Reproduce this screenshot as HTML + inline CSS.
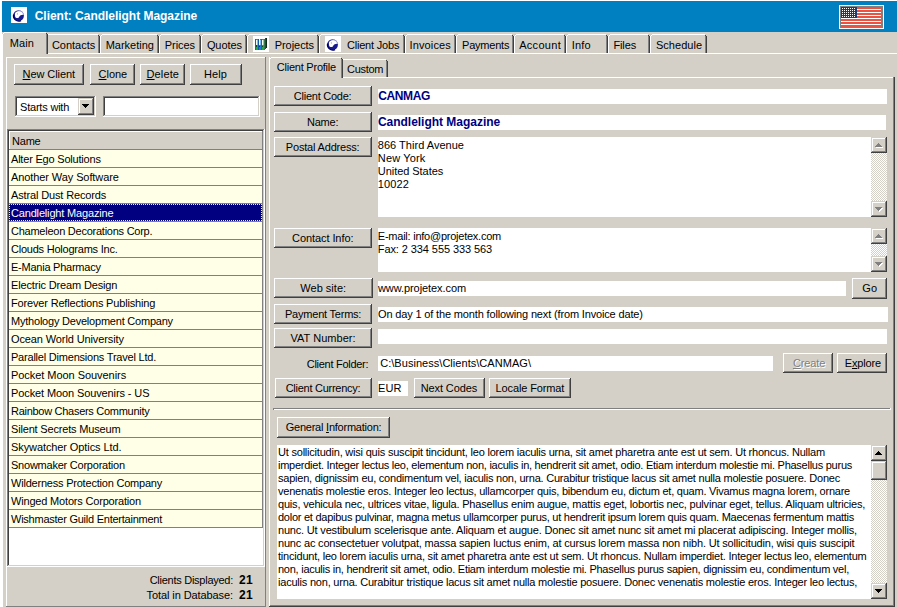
<!DOCTYPE html>
<html><head><meta charset="utf-8"><title>Client: Candlelight Magazine</title>
<style>
html,body{margin:0;padding:0;}
body{width:897px;height:607px;overflow:hidden;position:relative;background:#fff;font-family:"Liberation Sans", sans-serif;}
body>div{position:absolute;box-sizing:border-box;}
u{text-decoration:underline;text-underline-offset:1px;}
</style></head><body>
<div style="left:2px;top:32px;width:895px;height:575px;background:#D4D0C8;"></div>
<div style="left:2px;top:1px;width:895px;height:31px;background:#0080C0;"></div>
<svg style="position:absolute;left:11px;top:7px" width="16" height="16" viewBox="0 0 16 16">
<rect width="16" height="16" fill="#fff"/>
<circle cx="7.6" cy="8.6" r="5.4" fill="#1A1A90"/>
<path d="M2.6 7.5 A5.3 5.3 0 0 0 10 13.6" fill="none" stroke="#000060" stroke-width="1.2"/>
<path d="M3.9 6.6 C4.4 4.9 6.0 3.9 8.2 3.9 C10.6 4.0 12.6 5.4 13.2 7.8 C11.4 7.8 9.8 8.0 8.8 8.9 C8.2 9.6 7.8 10.6 7.0 11.0 C5.6 11.4 4.3 10.6 4.0 9.2 Z" fill="#fff"/>
<path d="M7.5 3.6 A5.0 5.0 0 0 1 12.6 8.2" fill="none" stroke="#9A9AD8" stroke-width="0.9"/>
<circle cx="6.4" cy="6.9" r="0.55" fill="#9090D0"/>
</svg>
<div style="left:34.699999999999996px;top:6px;font-size:12px;line-height:20px;font-weight:bold;color:#FFFFFF;letter-spacing:-0.030px;white-space:pre;">Client: Candlelight Magazine</div>
<svg style="position:absolute;left:839px;top:5px" width="45" height="24" viewBox="0 0 45 24" shape-rendering="crispEdges">
<rect width="45" height="24" fill="#fff"/>
<rect x="1" y="1" width="43" height="22" fill="#808080"/>
<rect x="2" y="2" width="40" height="20" fill="#fff"/>
<rect x="2" y="2" width="40" height="2" fill="#E85444"/><rect x="2" y="5" width="40" height="2" fill="#E85444"/><rect x="2" y="8" width="40" height="2" fill="#E85444"/><rect x="2" y="11" width="40" height="2" fill="#E85444"/><rect x="2" y="14" width="40" height="2" fill="#E85444"/><rect x="2" y="17" width="40" height="2" fill="#E85444"/><rect x="2" y="20" width="40" height="2" fill="#E85444"/>
<rect x="2" y="2" width="16" height="11" fill="#1E3C74"/>
<rect x="3" y="3" width="1" height="1" fill="#fff"/><rect x="5" y="3" width="1" height="1" fill="#fff"/><rect x="7" y="3" width="1" height="1" fill="#fff"/><rect x="9" y="3" width="1" height="1" fill="#fff"/><rect x="11" y="3" width="1" height="1" fill="#fff"/><rect x="13" y="3" width="1" height="1" fill="#fff"/><rect x="15" y="3" width="1" height="1" fill="#fff"/><rect x="3" y="5" width="1" height="1" fill="#fff"/><rect x="5" y="5" width="1" height="1" fill="#fff"/><rect x="7" y="5" width="1" height="1" fill="#fff"/><rect x="9" y="5" width="1" height="1" fill="#fff"/><rect x="11" y="5" width="1" height="1" fill="#fff"/><rect x="13" y="5" width="1" height="1" fill="#fff"/><rect x="15" y="5" width="1" height="1" fill="#fff"/><rect x="3" y="7" width="1" height="1" fill="#fff"/><rect x="5" y="7" width="1" height="1" fill="#fff"/><rect x="7" y="7" width="1" height="1" fill="#fff"/><rect x="9" y="7" width="1" height="1" fill="#fff"/><rect x="11" y="7" width="1" height="1" fill="#fff"/><rect x="13" y="7" width="1" height="1" fill="#fff"/><rect x="15" y="7" width="1" height="1" fill="#fff"/><rect x="3" y="9" width="1" height="1" fill="#fff"/><rect x="5" y="9" width="1" height="1" fill="#fff"/><rect x="7" y="9" width="1" height="1" fill="#fff"/><rect x="9" y="9" width="1" height="1" fill="#fff"/><rect x="11" y="9" width="1" height="1" fill="#fff"/><rect x="13" y="9" width="1" height="1" fill="#fff"/><rect x="15" y="9" width="1" height="1" fill="#fff"/><rect x="3" y="11" width="1" height="1" fill="#fff"/><rect x="5" y="11" width="1" height="1" fill="#fff"/><rect x="7" y="11" width="1" height="1" fill="#fff"/><rect x="9" y="11" width="1" height="1" fill="#fff"/><rect x="11" y="11" width="1" height="1" fill="#fff"/><rect x="13" y="11" width="1" height="1" fill="#fff"/><rect x="15" y="11" width="1" height="1" fill="#fff"/>
</svg>
<div style="left:2px;top:53px;width:895px;height:1px;background:#FFFFFF;"></div>
<div style="left:2px;top:53px;width:1px;height:554px;background:#FFFFFF;"></div>
<div style="left:3px;top:33px;width:43px;height:21px;background:#D4D0C8;"></div>
<div style="left:4px;top:32px;width:42px;height:1px;background:#FFFFFF;"></div>
<div style="left:3px;top:33px;width:1px;height:1px;background:#FFFFFF;"></div>
<div style="left:2px;top:34px;width:1px;height:20px;background:#FFFFFF;"></div>
<div style="left:46px;top:33px;width:1px;height:1px;background:#404040;"></div>
<div style="left:46px;top:34px;width:1px;height:20px;background:#808080;"></div>
<div style="left:47px;top:34px;width:1px;height:20px;background:#404040;"></div>
<div style="left:9.700000000000001px;top:33px;font-size:11px;line-height:20px;font-weight:normal;color:#000;letter-spacing:0.139px;white-space:pre;">Main</div>
<div style="left:48px;top:34px;width:50px;height:1px;background:#FFFFFF;"></div>
<div style="left:98px;top:35px;width:1px;height:1px;background:#404040;"></div>
<div style="left:98px;top:36px;width:1px;height:17px;background:#808080;"></div>
<div style="left:99px;top:36px;width:1px;height:17px;background:#404040;"></div>
<div style="left:51.9px;top:35px;font-size:11px;line-height:20px;font-weight:normal;color:#000;letter-spacing:-0.003px;white-space:pre;">Contacts</div>
<div style="left:102px;top:34px;width:55px;height:1px;background:#FFFFFF;"></div>
<div style="left:101px;top:35px;width:1px;height:1px;background:#FFFFFF;"></div>
<div style="left:100px;top:36px;width:1px;height:17px;background:#FFFFFF;"></div>
<div style="left:157px;top:35px;width:1px;height:1px;background:#404040;"></div>
<div style="left:157px;top:36px;width:1px;height:17px;background:#808080;"></div>
<div style="left:158px;top:36px;width:1px;height:17px;background:#404040;"></div>
<div style="left:105.7px;top:35px;font-size:11px;line-height:20px;font-weight:normal;color:#000;letter-spacing:-0.011px;white-space:pre;">Marketing</div>
<div style="left:161px;top:34px;width:38px;height:1px;background:#FFFFFF;"></div>
<div style="left:160px;top:35px;width:1px;height:1px;background:#FFFFFF;"></div>
<div style="left:159px;top:36px;width:1px;height:17px;background:#FFFFFF;"></div>
<div style="left:199px;top:35px;width:1px;height:1px;background:#404040;"></div>
<div style="left:199px;top:36px;width:1px;height:17px;background:#808080;"></div>
<div style="left:200px;top:36px;width:1px;height:17px;background:#404040;"></div>
<div style="left:164.70000000000002px;top:35px;font-size:11px;line-height:20px;font-weight:normal;color:#000;letter-spacing:-0.027px;white-space:pre;">Prices</div>
<div style="left:203px;top:34px;width:42px;height:1px;background:#FFFFFF;"></div>
<div style="left:202px;top:35px;width:1px;height:1px;background:#FFFFFF;"></div>
<div style="left:201px;top:36px;width:1px;height:17px;background:#FFFFFF;"></div>
<div style="left:245px;top:35px;width:1px;height:1px;background:#404040;"></div>
<div style="left:245px;top:36px;width:1px;height:17px;background:#808080;"></div>
<div style="left:246px;top:36px;width:1px;height:17px;background:#404040;"></div>
<div style="left:206.9px;top:35px;font-size:11px;line-height:20px;font-weight:normal;color:#000;letter-spacing:-0.078px;white-space:pre;">Quotes</div>
<div style="left:249px;top:34px;width:68px;height:1px;background:#FFFFFF;"></div>
<div style="left:248px;top:35px;width:1px;height:1px;background:#FFFFFF;"></div>
<div style="left:247px;top:36px;width:1px;height:17px;background:#FFFFFF;"></div>
<div style="left:317px;top:35px;width:1px;height:1px;background:#404040;"></div>
<div style="left:317px;top:36px;width:1px;height:17px;background:#808080;"></div>
<div style="left:318px;top:36px;width:1px;height:17px;background:#404040;"></div>
<svg style="position:absolute;left:253px;top:36px" width="16" height="16" viewBox="0 0 16 16" shape-rendering="crispEdges">
<rect width="16" height="16" fill="#fff"/>
<rect x="11" y="3" width="1" height="11" fill="#3A7A50"/>
<rect x="12" y="2" width="1" height="11" fill="#22503A"/>
<rect x="13" y="2" width="1" height="10" fill="#0E2A1A"/>
<rect x="2" y="3" width="3" height="11" fill="#18B040"/>
<rect x="5" y="3" width="3" height="11" fill="#2078D8"/>
<rect x="8" y="3" width="3" height="11" fill="#18B040"/>
<rect x="2" y="3" width="1" height="11" fill="#0E8030"/>
<rect x="5" y="3" width="1" height="11" fill="#1058A8"/>
<rect x="8" y="3" width="1" height="11" fill="#0E8030"/>
<rect x="3" y="4" width="1" height="5" fill="#F4FFF4"/>
<rect x="6" y="3" width="1" height="6" fill="#F8FCFF"/>
<rect x="9" y="4" width="1" height="5" fill="#F4FFF4"/>
<rect x="4" y="4" width="1" height="5" fill="#70D890"/>
<rect x="7" y="4" width="1" height="5" fill="#80B8F0"/>
<rect x="10" y="4" width="1" height="5" fill="#70D890"/>
<rect x="3" y="9" width="1" height="2" fill="#0A5020"/>
<rect x="6" y="10" width="1" height="1" fill="#0A3070"/>
<rect x="9" y="10" width="1" height="1" fill="#0A5020"/>
</svg>
<div style="left:274.7px;top:35px;font-size:11px;line-height:20px;font-weight:normal;color:#000;letter-spacing:-0.044px;white-space:pre;">Projects</div>
<div style="left:321px;top:34px;width:82px;height:1px;background:#FFFFFF;"></div>
<div style="left:320px;top:35px;width:1px;height:1px;background:#FFFFFF;"></div>
<div style="left:319px;top:36px;width:1px;height:17px;background:#FFFFFF;"></div>
<div style="left:403px;top:35px;width:1px;height:1px;background:#404040;"></div>
<div style="left:403px;top:36px;width:1px;height:17px;background:#808080;"></div>
<div style="left:404px;top:36px;width:1px;height:17px;background:#404040;"></div>
<svg style="position:absolute;left:325px;top:36px" width="16" height="16" viewBox="0 0 16 16">
<rect width="16" height="16" fill="#fff"/>
<circle cx="7.6" cy="8.6" r="5.4" fill="#1A1A90"/>
<path d="M2.6 7.5 A5.3 5.3 0 0 0 10 13.6" fill="none" stroke="#000060" stroke-width="1.2"/>
<path d="M3.9 6.6 C4.4 4.9 6.0 3.9 8.2 3.9 C10.6 4.0 12.6 5.4 13.2 7.8 C11.4 7.8 9.8 8.0 8.8 8.9 C8.2 9.6 7.8 10.6 7.0 11.0 C5.6 11.4 4.3 10.6 4.0 9.2 Z" fill="#fff"/>
<path d="M7.5 3.6 A5.0 5.0 0 0 1 12.6 8.2" fill="none" stroke="#9A9AD8" stroke-width="0.9"/>
<circle cx="6.4" cy="6.9" r="0.55" fill="#9090D0"/>
</svg>
<div style="left:346.90000000000003px;top:35px;font-size:11px;line-height:20px;font-weight:normal;color:#000;letter-spacing:-0.193px;white-space:pre;">Client Jobs</div>
<div style="left:407px;top:34px;width:47px;height:1px;background:#FFFFFF;"></div>
<div style="left:406px;top:35px;width:1px;height:1px;background:#FFFFFF;"></div>
<div style="left:405px;top:36px;width:1px;height:17px;background:#FFFFFF;"></div>
<div style="left:454px;top:35px;width:1px;height:1px;background:#404040;"></div>
<div style="left:454px;top:36px;width:1px;height:17px;background:#808080;"></div>
<div style="left:455px;top:36px;width:1px;height:17px;background:#404040;"></div>
<div style="left:409.5px;top:35px;font-size:11px;line-height:20px;font-weight:normal;color:#000;letter-spacing:0.143px;white-space:pre;">Invoices</div>
<div style="left:458px;top:34px;width:54px;height:1px;background:#FFFFFF;"></div>
<div style="left:457px;top:35px;width:1px;height:1px;background:#FFFFFF;"></div>
<div style="left:456px;top:36px;width:1px;height:17px;background:#FFFFFF;"></div>
<div style="left:512px;top:35px;width:1px;height:1px;background:#404040;"></div>
<div style="left:512px;top:36px;width:1px;height:17px;background:#808080;"></div>
<div style="left:513px;top:36px;width:1px;height:17px;background:#404040;"></div>
<div style="left:462.1px;top:35px;font-size:11px;line-height:20px;font-weight:normal;color:#000;letter-spacing:-0.228px;white-space:pre;">Payments</div>
<div style="left:516px;top:34px;width:48px;height:1px;background:#FFFFFF;"></div>
<div style="left:515px;top:35px;width:1px;height:1px;background:#FFFFFF;"></div>
<div style="left:514px;top:36px;width:1px;height:17px;background:#FFFFFF;"></div>
<div style="left:564px;top:35px;width:1px;height:1px;background:#404040;"></div>
<div style="left:564px;top:36px;width:1px;height:17px;background:#808080;"></div>
<div style="left:565px;top:36px;width:1px;height:17px;background:#404040;"></div>
<div style="left:519.1999999999999px;top:35px;font-size:11px;line-height:20px;font-weight:normal;color:#000;letter-spacing:0.293px;white-space:pre;">Account</div>
<div style="left:568px;top:34px;width:38px;height:1px;background:#FFFFFF;"></div>
<div style="left:567px;top:35px;width:1px;height:1px;background:#FFFFFF;"></div>
<div style="left:566px;top:36px;width:1px;height:17px;background:#FFFFFF;"></div>
<div style="left:606px;top:35px;width:1px;height:1px;background:#404040;"></div>
<div style="left:606px;top:36px;width:1px;height:17px;background:#808080;"></div>
<div style="left:607px;top:36px;width:1px;height:17px;background:#404040;"></div>
<div style="left:571.8px;top:35px;font-size:11px;line-height:20px;font-weight:normal;color:#000;letter-spacing:0.135px;white-space:pre;">Info</div>
<div style="left:610px;top:34px;width:38px;height:1px;background:#FFFFFF;"></div>
<div style="left:609px;top:35px;width:1px;height:1px;background:#FFFFFF;"></div>
<div style="left:608px;top:36px;width:1px;height:17px;background:#FFFFFF;"></div>
<div style="left:648px;top:35px;width:1px;height:1px;background:#404040;"></div>
<div style="left:648px;top:36px;width:1px;height:17px;background:#808080;"></div>
<div style="left:649px;top:36px;width:1px;height:17px;background:#404040;"></div>
<div style="left:613.5px;top:35px;font-size:11px;line-height:20px;font-weight:normal;color:#000;letter-spacing:-0.147px;white-space:pre;">Files</div>
<div style="left:652px;top:34px;width:53px;height:1px;background:#FFFFFF;"></div>
<div style="left:651px;top:35px;width:1px;height:1px;background:#FFFFFF;"></div>
<div style="left:650px;top:36px;width:1px;height:17px;background:#FFFFFF;"></div>
<div style="left:705px;top:35px;width:1px;height:1px;background:#404040;"></div>
<div style="left:705px;top:36px;width:1px;height:17px;background:#808080;"></div>
<div style="left:706px;top:36px;width:1px;height:17px;background:#404040;"></div>
<div style="left:655.9px;top:35px;font-size:11px;line-height:20px;font-weight:normal;color:#000;letter-spacing:0.053px;white-space:pre;">Schedule</div>
<div style="left:6px;top:57px;width:260px;height:1px;background:#FFFFFF;"></div>
<div style="left:6px;top:57px;width:1px;height:550px;background:#FFFFFF;"></div>
<div style="left:265px;top:57px;width:1px;height:550px;background:#808080;"></div>
<div style="left:6px;top:606px;width:260px;height:1px;background:#808080;"></div>
<div style="left:14px;top:64px;width:70px;height:21px;background:#D4D0C8;"></div>
<div style="left:14px;top:64px;width:70px;height:1px;background:#FFFFFF;"></div>
<div style="left:14px;top:64px;width:1px;height:21px;background:#FFFFFF;"></div>
<div style="left:14px;top:84px;width:70px;height:1px;background:#404040;"></div>
<div style="left:83px;top:64px;width:1px;height:21px;background:#404040;"></div>
<div style="left:15px;top:83px;width:68px;height:1px;background:#808080;"></div>
<div style="left:82px;top:65px;width:1px;height:19px;background:#808080;"></div>
<div style="left:22.6px;top:64px;font-size:11px;line-height:20px;font-weight:normal;color:#000;letter-spacing:-0.080px;white-space:pre;"><u>N</u>ew Client</div>
<div style="left:90px;top:64px;width:45px;height:21px;background:#D4D0C8;"></div>
<div style="left:90px;top:64px;width:45px;height:1px;background:#FFFFFF;"></div>
<div style="left:90px;top:64px;width:1px;height:21px;background:#FFFFFF;"></div>
<div style="left:90px;top:84px;width:45px;height:1px;background:#404040;"></div>
<div style="left:134px;top:64px;width:1px;height:21px;background:#404040;"></div>
<div style="left:91px;top:83px;width:43px;height:1px;background:#808080;"></div>
<div style="left:133px;top:65px;width:1px;height:19px;background:#808080;"></div>
<div style="left:98.6px;top:64px;font-size:11px;line-height:20px;font-weight:normal;color:#000;letter-spacing:-0.050px;white-space:pre;"><u>C</u>lone</div>
<div style="left:140px;top:64px;width:45px;height:21px;background:#D4D0C8;"></div>
<div style="left:140px;top:64px;width:45px;height:1px;background:#FFFFFF;"></div>
<div style="left:140px;top:64px;width:1px;height:21px;background:#FFFFFF;"></div>
<div style="left:140px;top:84px;width:45px;height:1px;background:#404040;"></div>
<div style="left:184px;top:64px;width:1px;height:21px;background:#404040;"></div>
<div style="left:141px;top:83px;width:43px;height:1px;background:#808080;"></div>
<div style="left:183px;top:65px;width:1px;height:19px;background:#808080;"></div>
<div style="left:146.5px;top:64px;font-size:11px;line-height:20px;font-weight:normal;color:#000;letter-spacing:0.131px;white-space:pre;"><u>D</u>elete</div>
<div style="left:190px;top:64px;width:52px;height:21px;background:#D4D0C8;"></div>
<div style="left:190px;top:64px;width:52px;height:1px;background:#FFFFFF;"></div>
<div style="left:190px;top:64px;width:1px;height:21px;background:#FFFFFF;"></div>
<div style="left:190px;top:84px;width:52px;height:1px;background:#404040;"></div>
<div style="left:241px;top:64px;width:1px;height:21px;background:#404040;"></div>
<div style="left:191px;top:83px;width:50px;height:1px;background:#808080;"></div>
<div style="left:240px;top:65px;width:1px;height:19px;background:#808080;"></div>
<div style="left:203.9px;top:64px;font-size:11px;line-height:20px;font-weight:normal;color:#000;letter-spacing:0.119px;white-space:pre;">Help</div>
<div style="left:15px;top:96px;width:81px;height:21px;background:#FFFFFF;"></div>
<div style="left:15px;top:96px;width:81px;height:1px;background:#808080;"></div>
<div style="left:15px;top:96px;width:1px;height:21px;background:#808080;"></div>
<div style="left:16px;top:97px;width:79px;height:1px;background:#404040;"></div>
<div style="left:16px;top:97px;width:1px;height:19px;background:#404040;"></div>
<div style="left:15px;top:116px;width:81px;height:1px;background:#FFFFFF;"></div>
<div style="left:95px;top:96px;width:1px;height:21px;background:#FFFFFF;"></div>
<div style="left:16px;top:115px;width:79px;height:1px;background:#D4D0C8;"></div>
<div style="left:94px;top:97px;width:1px;height:19px;background:#D4D0C8;"></div>
<div style="left:20px;top:97px;font-size:11px;line-height:20px;font-weight:normal;color:#000;letter-spacing:-0.2px;white-space:pre;">Starts with</div>
<div style="left:78px;top:98px;width:16px;height:17px;background:#D4D0C8;"></div>
<div style="left:79px;top:99px;width:14px;height:1px;background:#FFFFFF;"></div>
<div style="left:79px;top:99px;width:1px;height:15px;background:#FFFFFF;"></div>
<div style="left:78px;top:114px;width:16px;height:1px;background:#404040;"></div>
<div style="left:93px;top:98px;width:1px;height:17px;background:#404040;"></div>
<div style="left:79px;top:113px;width:14px;height:1px;background:#808080;"></div>
<div style="left:92px;top:99px;width:1px;height:15px;background:#808080;"></div>
<div style="left:82px;top:104px;width:7px;height:1px;background:#000;"></div>
<div style="left:83px;top:105px;width:5px;height:1px;background:#000;"></div>
<div style="left:84px;top:106px;width:3px;height:1px;background:#000;"></div>
<div style="left:85px;top:107px;width:1px;height:1px;background:#000;"></div>
<div style="left:103px;top:96px;width:157px;height:21px;background:#FFFFFF;"></div>
<div style="left:103px;top:96px;width:157px;height:1px;background:#808080;"></div>
<div style="left:103px;top:96px;width:1px;height:21px;background:#808080;"></div>
<div style="left:104px;top:97px;width:155px;height:1px;background:#404040;"></div>
<div style="left:104px;top:97px;width:1px;height:19px;background:#404040;"></div>
<div style="left:103px;top:116px;width:157px;height:1px;background:#FFFFFF;"></div>
<div style="left:259px;top:96px;width:1px;height:21px;background:#FFFFFF;"></div>
<div style="left:104px;top:115px;width:155px;height:1px;background:#D4D0C8;"></div>
<div style="left:258px;top:97px;width:1px;height:19px;background:#D4D0C8;"></div>
<div style="left:7px;top:129px;width:258px;height:438px;background:#FFFFFF;"></div>
<div style="left:7px;top:129px;width:258px;height:1px;background:#808080;"></div>
<div style="left:7px;top:129px;width:1px;height:438px;background:#808080;"></div>
<div style="left:8px;top:130px;width:256px;height:1px;background:#404040;"></div>
<div style="left:8px;top:130px;width:1px;height:436px;background:#404040;"></div>
<div style="left:7px;top:566px;width:258px;height:1px;background:#FFFFFF;"></div>
<div style="left:264px;top:129px;width:1px;height:438px;background:#FFFFFF;"></div>
<div style="left:8px;top:565px;width:256px;height:1px;background:#D4D0C8;"></div>
<div style="left:263px;top:130px;width:1px;height:436px;background:#D4D0C8;"></div>
<div style="left:9px;top:131px;width:254px;height:19px;background:#D4D0C8;"></div>
<div style="left:9px;top:131px;width:254px;height:1px;background:#FFFFFF;"></div>
<div style="left:9px;top:131px;width:1px;height:19px;background:#FFFFFF;"></div>
<div style="left:9px;top:149px;width:254px;height:1px;background:#808080;"></div>
<div style="left:262px;top:131px;width:1px;height:19px;background:#808080;"></div>
<div style="left:12px;top:131px;font-size:11px;line-height:20px;font-weight:normal;color:#000;letter-spacing:-0.2px;white-space:pre;">Name</div>
<div style="left:9px;top:150px;width:253px;height:17px;background:#FFFFE8;"></div>
<div style="left:9px;top:167px;width:254px;height:1px;background:#808080;"></div>
<div style="left:262px;top:150px;width:1px;height:18px;background:#808080;"></div>
<div style="left:11px;top:149px;font-size:11px;line-height:20px;font-weight:normal;color:#000;letter-spacing:-0.203px;white-space:pre;">Alter Ego Solutions</div>
<div style="left:9px;top:168px;width:253px;height:17px;background:#FFFFE8;"></div>
<div style="left:9px;top:185px;width:254px;height:1px;background:#808080;"></div>
<div style="left:262px;top:168px;width:1px;height:18px;background:#808080;"></div>
<div style="left:11px;top:167px;font-size:11px;line-height:20px;font-weight:normal;color:#000;letter-spacing:-0.092px;white-space:pre;">Another Way Software</div>
<div style="left:9px;top:186px;width:253px;height:17px;background:#FFFFE8;"></div>
<div style="left:9px;top:203px;width:254px;height:1px;background:#808080;"></div>
<div style="left:262px;top:186px;width:1px;height:18px;background:#808080;"></div>
<div style="left:11px;top:185px;font-size:11px;line-height:20px;font-weight:normal;color:#000;letter-spacing:-0.143px;white-space:pre;">Astral Dust Records</div>
<div style="left:9px;top:204px;width:253px;height:17px;background:#000080;"></div>
<div style="left:9px;top:221px;width:254px;height:1px;background:#808080;"></div>
<div style="left:262px;top:204px;width:1px;height:18px;background:#808080;"></div>
<div style="left:9px;top:204px;width:253px;height:17px;border:1px dotted #FFFF80"></div>
<div style="left:11px;top:203px;font-size:11px;line-height:20px;font-weight:normal;color:#FFFFFF;letter-spacing:-0.170px;white-space:pre;">Candlelight Magazine</div>
<div style="left:9px;top:222px;width:253px;height:17px;background:#FFFFE8;"></div>
<div style="left:9px;top:239px;width:254px;height:1px;background:#808080;"></div>
<div style="left:262px;top:222px;width:1px;height:18px;background:#808080;"></div>
<div style="left:11px;top:221px;font-size:11px;line-height:20px;font-weight:normal;color:#000;letter-spacing:-0.247px;white-space:pre;">Chameleon Decorations Corp.</div>
<div style="left:9px;top:240px;width:253px;height:17px;background:#FFFFE8;"></div>
<div style="left:9px;top:257px;width:254px;height:1px;background:#808080;"></div>
<div style="left:262px;top:240px;width:1px;height:18px;background:#808080;"></div>
<div style="left:11px;top:239px;font-size:11px;line-height:20px;font-weight:normal;color:#000;letter-spacing:-0.228px;white-space:pre;">Clouds Holograms Inc.</div>
<div style="left:9px;top:258px;width:253px;height:17px;background:#FFFFE8;"></div>
<div style="left:9px;top:275px;width:254px;height:1px;background:#808080;"></div>
<div style="left:262px;top:258px;width:1px;height:18px;background:#808080;"></div>
<div style="left:11px;top:257px;font-size:11px;line-height:20px;font-weight:normal;color:#000;letter-spacing:-0.240px;white-space:pre;">E-Mania Pharmacy</div>
<div style="left:9px;top:276px;width:253px;height:17px;background:#FFFFE8;"></div>
<div style="left:9px;top:293px;width:254px;height:1px;background:#808080;"></div>
<div style="left:262px;top:276px;width:1px;height:18px;background:#808080;"></div>
<div style="left:11px;top:275px;font-size:11px;line-height:20px;font-weight:normal;color:#000;letter-spacing:-0.153px;white-space:pre;">Electric Dream Design</div>
<div style="left:9px;top:294px;width:253px;height:17px;background:#FFFFE8;"></div>
<div style="left:9px;top:311px;width:254px;height:1px;background:#808080;"></div>
<div style="left:262px;top:294px;width:1px;height:18px;background:#808080;"></div>
<div style="left:11px;top:293px;font-size:11px;line-height:20px;font-weight:normal;color:#000;letter-spacing:-0.166px;white-space:pre;">Forever Reflections Publishing</div>
<div style="left:9px;top:312px;width:253px;height:17px;background:#FFFFE8;"></div>
<div style="left:9px;top:329px;width:254px;height:1px;background:#808080;"></div>
<div style="left:262px;top:312px;width:1px;height:18px;background:#808080;"></div>
<div style="left:11px;top:311px;font-size:11px;line-height:20px;font-weight:normal;color:#000;letter-spacing:-0.215px;white-space:pre;">Mythology Development Company</div>
<div style="left:9px;top:330px;width:253px;height:17px;background:#FFFFE8;"></div>
<div style="left:9px;top:347px;width:254px;height:1px;background:#808080;"></div>
<div style="left:262px;top:330px;width:1px;height:18px;background:#808080;"></div>
<div style="left:11px;top:329px;font-size:11px;line-height:20px;font-weight:normal;color:#000;letter-spacing:-0.116px;white-space:pre;">Ocean World University</div>
<div style="left:9px;top:348px;width:253px;height:17px;background:#FFFFE8;"></div>
<div style="left:9px;top:365px;width:254px;height:1px;background:#808080;"></div>
<div style="left:262px;top:348px;width:1px;height:18px;background:#808080;"></div>
<div style="left:11px;top:347px;font-size:11px;line-height:20px;font-weight:normal;color:#000;letter-spacing:-0.214px;white-space:pre;">Parallel Dimensions Travel Ltd.</div>
<div style="left:9px;top:366px;width:253px;height:17px;background:#FFFFE8;"></div>
<div style="left:9px;top:383px;width:254px;height:1px;background:#808080;"></div>
<div style="left:262px;top:366px;width:1px;height:18px;background:#808080;"></div>
<div style="left:11px;top:365px;font-size:11px;line-height:20px;font-weight:normal;color:#000;letter-spacing:-0.051px;white-space:pre;">Pocket Moon Souvenirs</div>
<div style="left:9px;top:384px;width:253px;height:17px;background:#FFFFE8;"></div>
<div style="left:9px;top:401px;width:254px;height:1px;background:#808080;"></div>
<div style="left:262px;top:384px;width:1px;height:18px;background:#808080;"></div>
<div style="left:11px;top:383px;font-size:11px;line-height:20px;font-weight:normal;color:#000;letter-spacing:-0.109px;white-space:pre;">Pocket Moon Souvenirs - US</div>
<div style="left:9px;top:402px;width:253px;height:17px;background:#FFFFE8;"></div>
<div style="left:9px;top:419px;width:254px;height:1px;background:#808080;"></div>
<div style="left:262px;top:402px;width:1px;height:18px;background:#808080;"></div>
<div style="left:11px;top:401px;font-size:11px;line-height:20px;font-weight:normal;color:#000;letter-spacing:-0.284px;white-space:pre;">Rainbow Chasers Community</div>
<div style="left:9px;top:420px;width:253px;height:17px;background:#FFFFE8;"></div>
<div style="left:9px;top:437px;width:254px;height:1px;background:#808080;"></div>
<div style="left:262px;top:420px;width:1px;height:18px;background:#808080;"></div>
<div style="left:11px;top:419px;font-size:11px;line-height:20px;font-weight:normal;color:#000;letter-spacing:-0.177px;white-space:pre;">Silent Secrets Museum</div>
<div style="left:9px;top:438px;width:253px;height:17px;background:#FFFFE8;"></div>
<div style="left:9px;top:455px;width:254px;height:1px;background:#808080;"></div>
<div style="left:262px;top:438px;width:1px;height:18px;background:#808080;"></div>
<div style="left:11px;top:437px;font-size:11px;line-height:20px;font-weight:normal;color:#000;letter-spacing:-0.095px;white-space:pre;">Skywatcher Optics Ltd.</div>
<div style="left:9px;top:456px;width:253px;height:17px;background:#FFFFE8;"></div>
<div style="left:9px;top:473px;width:254px;height:1px;background:#808080;"></div>
<div style="left:262px;top:456px;width:1px;height:18px;background:#808080;"></div>
<div style="left:11px;top:455px;font-size:11px;line-height:20px;font-weight:normal;color:#000;letter-spacing:-0.230px;white-space:pre;">Snowmaker Corporation</div>
<div style="left:9px;top:474px;width:253px;height:17px;background:#FFFFE8;"></div>
<div style="left:9px;top:491px;width:254px;height:1px;background:#808080;"></div>
<div style="left:262px;top:474px;width:1px;height:18px;background:#808080;"></div>
<div style="left:11px;top:473px;font-size:11px;line-height:20px;font-weight:normal;color:#000;letter-spacing:-0.211px;white-space:pre;">Wilderness Protection Company</div>
<div style="left:9px;top:492px;width:253px;height:17px;background:#FFFFE8;"></div>
<div style="left:9px;top:509px;width:254px;height:1px;background:#808080;"></div>
<div style="left:262px;top:492px;width:1px;height:18px;background:#808080;"></div>
<div style="left:11px;top:491px;font-size:11px;line-height:20px;font-weight:normal;color:#000;letter-spacing:-0.181px;white-space:pre;">Winged Motors Corporation</div>
<div style="left:9px;top:510px;width:253px;height:17px;background:#FFFFE8;"></div>
<div style="left:9px;top:527px;width:254px;height:1px;background:#808080;"></div>
<div style="left:262px;top:510px;width:1px;height:18px;background:#808080;"></div>
<div style="left:11px;top:509px;font-size:11px;line-height:20px;font-weight:normal;color:#000;letter-spacing:-0.245px;white-space:pre;">Wishmaster Guild Entertainment</div>
<div style="left:149.70000000000002px;top:570px;font-size:11px;line-height:20px;font-weight:normal;color:#000;letter-spacing:-0.264px;white-space:pre;">Clients Displayed:</div>
<div style="left:239.0px;top:570px;font-size:12px;line-height:20px;font-weight:bold;color:#000;letter-spacing:0.270px;white-space:pre;">21</div>
<div style="left:146.5px;top:585px;font-size:11px;line-height:20px;font-weight:normal;color:#000;letter-spacing:-0.087px;white-space:pre;">Total in Database:</div>
<div style="left:239.0px;top:585px;font-size:12px;line-height:20px;font-weight:bold;color:#000;letter-spacing:0.270px;white-space:pre;">21</div>
<div style="left:269px;top:77px;width:625px;height:1px;background:#FFFFFF;"></div>
<div style="left:269px;top:57px;width:1px;height:550px;background:#FFFFFF;"></div>
<div style="left:893px;top:77px;width:1px;height:529px;background:#808080;"></div>
<div style="left:894px;top:77px;width:1px;height:530px;background:#404040;"></div>
<div style="left:270px;top:605px;width:624px;height:1px;background:#808080;"></div>
<div style="left:269px;top:606px;width:626px;height:1px;background:#404040;"></div>
<div style="left:270px;top:58px;width:71px;height:20px;background:#D4D0C8;"></div>
<div style="left:271px;top:57px;width:70px;height:1px;background:#FFFFFF;"></div>
<div style="left:270px;top:58px;width:1px;height:1px;background:#FFFFFF;"></div>
<div style="left:269px;top:59px;width:1px;height:19px;background:#FFFFFF;"></div>
<div style="left:341px;top:58px;width:1px;height:1px;background:#404040;"></div>
<div style="left:341px;top:59px;width:1px;height:19px;background:#808080;"></div>
<div style="left:342px;top:59px;width:1px;height:19px;background:#404040;"></div>
<div style="left:276.8px;top:57px;font-size:11px;line-height:20px;font-weight:normal;color:#000;letter-spacing:-0.233px;white-space:pre;">Client Profile</div>
<div style="left:343px;top:59px;width:43px;height:1px;background:#FFFFFF;"></div>
<div style="left:386px;top:60px;width:1px;height:1px;background:#404040;"></div>
<div style="left:386px;top:61px;width:1px;height:16px;background:#808080;"></div>
<div style="left:387px;top:61px;width:1px;height:16px;background:#404040;"></div>
<div style="left:347.1px;top:59px;font-size:11px;line-height:20px;font-weight:normal;color:#000;letter-spacing:-0.334px;white-space:pre;">Custom</div>
<div style="left:274px;top:86px;width:98px;height:20px;background:#D4D0C8;"></div>
<div style="left:274px;top:86px;width:98px;height:1px;background:#FFFFFF;"></div>
<div style="left:274px;top:86px;width:1px;height:20px;background:#FFFFFF;"></div>
<div style="left:274px;top:105px;width:98px;height:1px;background:#404040;"></div>
<div style="left:371px;top:86px;width:1px;height:20px;background:#404040;"></div>
<div style="left:275px;top:104px;width:96px;height:1px;background:#808080;"></div>
<div style="left:370px;top:87px;width:1px;height:18px;background:#808080;"></div>
<div style="left:293.8px;top:86px;font-size:11px;line-height:20px;font-weight:normal;color:#000;letter-spacing:-0.246px;white-space:pre;">Client Code:</div>
<div style="left:378px;top:89px;width:509px;height:15px;background:#FFFFFF;"></div>
<div style="left:378.2px;top:86px;font-size:12px;line-height:20px;font-weight:bold;color:#000080;letter-spacing:-0.367px;white-space:pre;">CANMAG</div>
<div style="left:274px;top:112px;width:98px;height:20px;background:#D4D0C8;"></div>
<div style="left:274px;top:112px;width:98px;height:1px;background:#FFFFFF;"></div>
<div style="left:274px;top:112px;width:1px;height:20px;background:#FFFFFF;"></div>
<div style="left:274px;top:131px;width:98px;height:1px;background:#404040;"></div>
<div style="left:371px;top:112px;width:1px;height:20px;background:#404040;"></div>
<div style="left:275px;top:130px;width:96px;height:1px;background:#808080;"></div>
<div style="left:370px;top:113px;width:1px;height:18px;background:#808080;"></div>
<div style="left:307.0px;top:112px;font-size:11px;line-height:20px;font-weight:normal;color:#000;letter-spacing:-0.241px;white-space:pre;">Name:</div>
<div style="left:378px;top:115px;width:508px;height:15px;background:#FFFFFF;"></div>
<div style="left:377.90000000000003px;top:112px;font-size:12px;line-height:20px;font-weight:bold;color:#000080;letter-spacing:-0.019px;white-space:pre;">Candlelight Magazine</div>
<div style="left:274px;top:137px;width:98px;height:20px;background:#D4D0C8;"></div>
<div style="left:274px;top:137px;width:98px;height:1px;background:#FFFFFF;"></div>
<div style="left:274px;top:137px;width:1px;height:20px;background:#FFFFFF;"></div>
<div style="left:274px;top:156px;width:98px;height:1px;background:#404040;"></div>
<div style="left:371px;top:137px;width:1px;height:20px;background:#404040;"></div>
<div style="left:275px;top:155px;width:96px;height:1px;background:#808080;"></div>
<div style="left:370px;top:138px;width:1px;height:18px;background:#808080;"></div>
<div style="left:285.8px;top:137px;font-size:11px;line-height:20px;font-weight:normal;color:#000;letter-spacing:-0.183px;white-space:pre;">Postal Address:</div>
<div style="left:378px;top:137px;width:493px;height:80px;background:#FFFFFF;"></div>
<div style="left:377.8px;top:135px;font-size:11px;line-height:20px;font-weight:normal;color:#000;letter-spacing:0.022px;white-space:pre;">866 Third Avenue</div>
<div style="left:377.8px;top:148px;font-size:11px;line-height:20px;font-weight:normal;color:#000;letter-spacing:0.139px;white-space:pre;">New York</div>
<div style="left:377.8px;top:161px;font-size:11px;line-height:20px;font-weight:normal;color:#000;letter-spacing:-0.050px;white-space:pre;">United States</div>
<div style="left:377.8px;top:174px;font-size:11px;line-height:20px;font-weight:normal;color:#000;letter-spacing:0.121px;white-space:pre;">10022</div>
<div style="left:871px;top:137px;width:16px;height:80px;background-color:#D4D0C8;background-image:repeating-conic-gradient(#fff 0 25%, #D4D0C8 0 50%);background-size:2px 2px;"></div>
<div style="left:871px;top:137px;width:16px;height:16px;background:#D4D0C8;"></div>
<div style="left:871px;top:137px;width:16px;height:1px;background:#D4D0C8;"></div>
<div style="left:871px;top:137px;width:1px;height:16px;background:#D4D0C8;"></div>
<div style="left:872px;top:138px;width:14px;height:1px;background:#FFFFFF;"></div>
<div style="left:872px;top:138px;width:1px;height:14px;background:#FFFFFF;"></div>
<div style="left:871px;top:152px;width:16px;height:1px;background:#404040;"></div>
<div style="left:886px;top:137px;width:1px;height:16px;background:#404040;"></div>
<div style="left:872px;top:151px;width:14px;height:1px;background:#808080;"></div>
<div style="left:885px;top:138px;width:1px;height:14px;background:#808080;"></div>
<div style="left:879px;top:144px;width:1px;height:1px;background:#FFFFFF;"></div>
<div style="left:878px;top:145px;width:3px;height:1px;background:#FFFFFF;"></div>
<div style="left:877px;top:146px;width:5px;height:1px;background:#FFFFFF;"></div>
<div style="left:876px;top:147px;width:7px;height:1px;background:#FFFFFF;"></div>
<div style="left:878px;top:143px;width:1px;height:1px;background:#808080;"></div>
<div style="left:877px;top:144px;width:3px;height:1px;background:#808080;"></div>
<div style="left:876px;top:145px;width:5px;height:1px;background:#808080;"></div>
<div style="left:875px;top:146px;width:7px;height:1px;background:#808080;"></div>
<div style="left:871px;top:201px;width:16px;height:16px;background:#D4D0C8;"></div>
<div style="left:871px;top:201px;width:16px;height:1px;background:#D4D0C8;"></div>
<div style="left:871px;top:201px;width:1px;height:16px;background:#D4D0C8;"></div>
<div style="left:872px;top:202px;width:14px;height:1px;background:#FFFFFF;"></div>
<div style="left:872px;top:202px;width:1px;height:14px;background:#FFFFFF;"></div>
<div style="left:871px;top:216px;width:16px;height:1px;background:#404040;"></div>
<div style="left:886px;top:201px;width:1px;height:16px;background:#404040;"></div>
<div style="left:872px;top:215px;width:14px;height:1px;background:#808080;"></div>
<div style="left:885px;top:202px;width:1px;height:14px;background:#808080;"></div>
<div style="left:876px;top:208px;width:7px;height:1px;background:#FFFFFF;"></div>
<div style="left:877px;top:209px;width:5px;height:1px;background:#FFFFFF;"></div>
<div style="left:878px;top:210px;width:3px;height:1px;background:#FFFFFF;"></div>
<div style="left:879px;top:211px;width:1px;height:1px;background:#FFFFFF;"></div>
<div style="left:875px;top:207px;width:7px;height:1px;background:#808080;"></div>
<div style="left:876px;top:208px;width:5px;height:1px;background:#808080;"></div>
<div style="left:877px;top:209px;width:3px;height:1px;background:#808080;"></div>
<div style="left:878px;top:210px;width:1px;height:1px;background:#808080;"></div>
<div style="left:274px;top:228px;width:98px;height:20px;background:#D4D0C8;"></div>
<div style="left:274px;top:228px;width:98px;height:1px;background:#FFFFFF;"></div>
<div style="left:274px;top:228px;width:1px;height:20px;background:#FFFFFF;"></div>
<div style="left:274px;top:247px;width:98px;height:1px;background:#404040;"></div>
<div style="left:371px;top:228px;width:1px;height:20px;background:#404040;"></div>
<div style="left:275px;top:246px;width:96px;height:1px;background:#808080;"></div>
<div style="left:370px;top:229px;width:1px;height:18px;background:#808080;"></div>
<div style="left:292.1px;top:228px;font-size:11px;line-height:20px;font-weight:normal;color:#000;letter-spacing:-0.083px;white-space:pre;">Contact Info:</div>
<div style="left:378px;top:228px;width:493px;height:44px;background:#FFFFFF;"></div>
<div style="left:377.8px;top:226px;font-size:11px;line-height:20px;font-weight:normal;color:#000;letter-spacing:-0.238px;white-space:pre;">E-mail: info@projetex.com</div>
<div style="left:377.8px;top:239px;font-size:11px;line-height:20px;font-weight:normal;color:#000;letter-spacing:-0.087px;white-space:pre;">Fax: 2 334 555 333 563</div>
<div style="left:871px;top:228px;width:16px;height:44px;background-color:#D4D0C8;background-image:repeating-conic-gradient(#fff 0 25%, #D4D0C8 0 50%);background-size:2px 2px;"></div>
<div style="left:871px;top:228px;width:16px;height:16px;background:#D4D0C8;"></div>
<div style="left:871px;top:228px;width:16px;height:1px;background:#D4D0C8;"></div>
<div style="left:871px;top:228px;width:1px;height:16px;background:#D4D0C8;"></div>
<div style="left:872px;top:229px;width:14px;height:1px;background:#FFFFFF;"></div>
<div style="left:872px;top:229px;width:1px;height:14px;background:#FFFFFF;"></div>
<div style="left:871px;top:243px;width:16px;height:1px;background:#404040;"></div>
<div style="left:886px;top:228px;width:1px;height:16px;background:#404040;"></div>
<div style="left:872px;top:242px;width:14px;height:1px;background:#808080;"></div>
<div style="left:885px;top:229px;width:1px;height:14px;background:#808080;"></div>
<div style="left:879px;top:235px;width:1px;height:1px;background:#FFFFFF;"></div>
<div style="left:878px;top:236px;width:3px;height:1px;background:#FFFFFF;"></div>
<div style="left:877px;top:237px;width:5px;height:1px;background:#FFFFFF;"></div>
<div style="left:876px;top:238px;width:7px;height:1px;background:#FFFFFF;"></div>
<div style="left:878px;top:234px;width:1px;height:1px;background:#808080;"></div>
<div style="left:877px;top:235px;width:3px;height:1px;background:#808080;"></div>
<div style="left:876px;top:236px;width:5px;height:1px;background:#808080;"></div>
<div style="left:875px;top:237px;width:7px;height:1px;background:#808080;"></div>
<div style="left:871px;top:256px;width:16px;height:16px;background:#D4D0C8;"></div>
<div style="left:871px;top:256px;width:16px;height:1px;background:#D4D0C8;"></div>
<div style="left:871px;top:256px;width:1px;height:16px;background:#D4D0C8;"></div>
<div style="left:872px;top:257px;width:14px;height:1px;background:#FFFFFF;"></div>
<div style="left:872px;top:257px;width:1px;height:14px;background:#FFFFFF;"></div>
<div style="left:871px;top:271px;width:16px;height:1px;background:#404040;"></div>
<div style="left:886px;top:256px;width:1px;height:16px;background:#404040;"></div>
<div style="left:872px;top:270px;width:14px;height:1px;background:#808080;"></div>
<div style="left:885px;top:257px;width:1px;height:14px;background:#808080;"></div>
<div style="left:876px;top:263px;width:7px;height:1px;background:#FFFFFF;"></div>
<div style="left:877px;top:264px;width:5px;height:1px;background:#FFFFFF;"></div>
<div style="left:878px;top:265px;width:3px;height:1px;background:#FFFFFF;"></div>
<div style="left:879px;top:266px;width:1px;height:1px;background:#FFFFFF;"></div>
<div style="left:875px;top:262px;width:7px;height:1px;background:#808080;"></div>
<div style="left:876px;top:263px;width:5px;height:1px;background:#808080;"></div>
<div style="left:877px;top:264px;width:3px;height:1px;background:#808080;"></div>
<div style="left:878px;top:265px;width:1px;height:1px;background:#808080;"></div>
<div style="left:274px;top:278px;width:99px;height:20px;background:#D4D0C8;"></div>
<div style="left:274px;top:278px;width:99px;height:1px;background:#FFFFFF;"></div>
<div style="left:274px;top:278px;width:1px;height:20px;background:#FFFFFF;"></div>
<div style="left:274px;top:297px;width:99px;height:1px;background:#404040;"></div>
<div style="left:372px;top:278px;width:1px;height:20px;background:#404040;"></div>
<div style="left:275px;top:296px;width:97px;height:1px;background:#808080;"></div>
<div style="left:371px;top:279px;width:1px;height:18px;background:#808080;"></div>
<div style="left:300.3px;top:278px;font-size:11px;line-height:20px;font-weight:normal;color:#000;letter-spacing:0.016px;white-space:pre;">Web site:</div>
<div style="left:378px;top:281px;width:468px;height:15px;background:#FFFFFF;"></div>
<div style="left:378.0px;top:278px;font-size:11px;line-height:20px;font-weight:normal;color:#000;letter-spacing:-0.073px;white-space:pre;">www.projetex.com</div>
<div style="left:852px;top:278px;width:35px;height:21px;background:#D4D0C8;"></div>
<div style="left:852px;top:278px;width:35px;height:1px;background:#FFFFFF;"></div>
<div style="left:852px;top:278px;width:1px;height:21px;background:#FFFFFF;"></div>
<div style="left:852px;top:298px;width:35px;height:1px;background:#404040;"></div>
<div style="left:886px;top:278px;width:1px;height:21px;background:#404040;"></div>
<div style="left:853px;top:297px;width:33px;height:1px;background:#808080;"></div>
<div style="left:885px;top:279px;width:1px;height:19px;background:#808080;"></div>
<div style="left:862.1999999999999px;top:278px;font-size:11px;line-height:20px;font-weight:normal;color:#000;letter-spacing:0.156px;white-space:pre;">Go</div>
<div style="left:274px;top:304px;width:98px;height:20px;background:#D4D0C8;"></div>
<div style="left:274px;top:304px;width:98px;height:1px;background:#FFFFFF;"></div>
<div style="left:274px;top:304px;width:1px;height:20px;background:#FFFFFF;"></div>
<div style="left:274px;top:323px;width:98px;height:1px;background:#404040;"></div>
<div style="left:371px;top:304px;width:1px;height:20px;background:#404040;"></div>
<div style="left:275px;top:322px;width:96px;height:1px;background:#808080;"></div>
<div style="left:370px;top:305px;width:1px;height:18px;background:#808080;"></div>
<div style="left:285.0px;top:304px;font-size:11px;line-height:20px;font-weight:normal;color:#000;letter-spacing:-0.220px;white-space:pre;">Payment Terms:</div>
<div style="left:378px;top:307px;width:510px;height:15px;background:#FFFFFF;"></div>
<div style="left:378.0px;top:304px;font-size:11px;line-height:20px;font-weight:normal;color:#000;letter-spacing:-0.152px;white-space:pre;">On day 1 of the month following next (from Invoice date)</div>
<div style="left:274px;top:328px;width:98px;height:20px;background:#D4D0C8;"></div>
<div style="left:274px;top:328px;width:98px;height:1px;background:#FFFFFF;"></div>
<div style="left:274px;top:328px;width:1px;height:20px;background:#FFFFFF;"></div>
<div style="left:274px;top:347px;width:98px;height:1px;background:#404040;"></div>
<div style="left:371px;top:328px;width:1px;height:20px;background:#404040;"></div>
<div style="left:275px;top:346px;width:96px;height:1px;background:#808080;"></div>
<div style="left:370px;top:329px;width:1px;height:18px;background:#808080;"></div>
<div style="left:290.5px;top:328px;font-size:11px;line-height:20px;font-weight:normal;color:#000;letter-spacing:0.028px;white-space:pre;">VAT Number:</div>
<div style="left:378px;top:329px;width:509px;height:15px;background:#FFFFFF;"></div>
<div style="left:306.8px;top:354px;font-size:11px;line-height:20px;font-weight:normal;color:#000;letter-spacing:-0.287px;white-space:pre;">Client Folder:</div>
<div style="left:378px;top:356px;width:395px;height:15px;background:#FFFFFF;"></div>
<div style="left:380.2px;top:353px;font-size:11px;line-height:20px;font-weight:normal;color:#000;letter-spacing:0.038px;white-space:pre;">C:\Business\Clients\CANMAG\</div>
<div style="left:783px;top:353px;width:50px;height:20px;background:#D4D0C8;"></div>
<div style="left:783px;top:353px;width:50px;height:1px;background:#FFFFFF;"></div>
<div style="left:783px;top:353px;width:1px;height:20px;background:#FFFFFF;"></div>
<div style="left:783px;top:372px;width:50px;height:1px;background:#404040;"></div>
<div style="left:832px;top:353px;width:1px;height:20px;background:#404040;"></div>
<div style="left:784px;top:371px;width:48px;height:1px;background:#808080;"></div>
<div style="left:831px;top:354px;width:1px;height:18px;background:#808080;"></div>
<div style="left:793.9px;top:354px;font-size:11px;line-height:20px;font-weight:normal;color:#FFFFFF;letter-spacing:-0.122px;white-space:pre;"><u>C</u>reate</div>
<div style="left:792.9px;top:353px;font-size:11px;line-height:20px;font-weight:normal;color:#808080;letter-spacing:-0.122px;white-space:pre;"><u>C</u>reate</div>
<div style="left:837px;top:353px;width:50px;height:20px;background:#D4D0C8;"></div>
<div style="left:837px;top:353px;width:50px;height:1px;background:#FFFFFF;"></div>
<div style="left:837px;top:353px;width:1px;height:20px;background:#FFFFFF;"></div>
<div style="left:837px;top:372px;width:50px;height:1px;background:#404040;"></div>
<div style="left:886px;top:353px;width:1px;height:20px;background:#404040;"></div>
<div style="left:838px;top:371px;width:48px;height:1px;background:#808080;"></div>
<div style="left:885px;top:354px;width:1px;height:18px;background:#808080;"></div>
<div style="left:844.8px;top:353px;font-size:11px;line-height:20px;font-weight:normal;color:#000;letter-spacing:-0.173px;white-space:pre;">E<u>x</u>plore</div>
<div style="left:275px;top:378px;width:97px;height:20px;background:#D4D0C8;"></div>
<div style="left:275px;top:378px;width:97px;height:1px;background:#FFFFFF;"></div>
<div style="left:275px;top:378px;width:1px;height:20px;background:#FFFFFF;"></div>
<div style="left:275px;top:397px;width:97px;height:1px;background:#404040;"></div>
<div style="left:371px;top:378px;width:1px;height:20px;background:#404040;"></div>
<div style="left:276px;top:396px;width:95px;height:1px;background:#808080;"></div>
<div style="left:370px;top:379px;width:1px;height:18px;background:#808080;"></div>
<div style="left:285.7px;top:378px;font-size:11px;line-height:20px;font-weight:normal;color:#000;letter-spacing:-0.266px;white-space:pre;">Client Currency:</div>
<div style="left:378px;top:381px;width:30px;height:15px;background:#FFFFFF;"></div>
<div style="left:378.0px;top:378px;font-size:11px;line-height:20px;font-weight:normal;color:#000;letter-spacing:0.089px;white-space:pre;">EUR</div>
<div style="left:414px;top:378px;width:71px;height:20px;background:#D4D0C8;"></div>
<div style="left:414px;top:378px;width:71px;height:1px;background:#FFFFFF;"></div>
<div style="left:414px;top:378px;width:1px;height:20px;background:#FFFFFF;"></div>
<div style="left:414px;top:397px;width:71px;height:1px;background:#404040;"></div>
<div style="left:484px;top:378px;width:1px;height:20px;background:#404040;"></div>
<div style="left:415px;top:396px;width:69px;height:1px;background:#808080;"></div>
<div style="left:483px;top:379px;width:1px;height:18px;background:#808080;"></div>
<div style="left:420.7px;top:378px;font-size:11px;line-height:20px;font-weight:normal;color:#000;letter-spacing:-0.098px;white-space:pre;">Next Codes</div>
<div style="left:489px;top:378px;width:82px;height:20px;background:#D4D0C8;"></div>
<div style="left:489px;top:378px;width:82px;height:1px;background:#FFFFFF;"></div>
<div style="left:489px;top:378px;width:1px;height:20px;background:#FFFFFF;"></div>
<div style="left:489px;top:397px;width:82px;height:1px;background:#404040;"></div>
<div style="left:570px;top:378px;width:1px;height:20px;background:#404040;"></div>
<div style="left:490px;top:396px;width:80px;height:1px;background:#808080;"></div>
<div style="left:569px;top:379px;width:1px;height:18px;background:#808080;"></div>
<div style="left:495.6px;top:378px;font-size:11px;line-height:20px;font-weight:normal;color:#000;letter-spacing:-0.124px;white-space:pre;">Locale Format</div>
<div style="left:273px;top:408px;width:617px;height:1px;background:#808080;"></div>
<div style="left:274px;top:409px;width:617px;height:1px;background:#FFFFFF;"></div>
<div style="left:273px;top:409px;width:1px;height:1px;background:#808080;"></div>
<div style="left:890px;top:408px;width:1px;height:1px;background:#FFFFFF;"></div>
<div style="left:277px;top:417px;width:113px;height:21px;background:#D4D0C8;"></div>
<div style="left:277px;top:417px;width:113px;height:1px;background:#FFFFFF;"></div>
<div style="left:277px;top:417px;width:1px;height:21px;background:#FFFFFF;"></div>
<div style="left:277px;top:437px;width:113px;height:1px;background:#404040;"></div>
<div style="left:389px;top:417px;width:1px;height:21px;background:#404040;"></div>
<div style="left:278px;top:436px;width:111px;height:1px;background:#808080;"></div>
<div style="left:388px;top:418px;width:1px;height:19px;background:#808080;"></div>
<div style="left:285.7px;top:417px;font-size:11px;line-height:20px;font-weight:normal;color:#000;letter-spacing:-0.230px;white-space:pre;">General <u>I</u>nformation:</div>
<div style="left:277px;top:445px;width:594px;height:154px;background:#FFFFFF;"></div>
<div style="left:278px;top:442px;font-size:11px;line-height:20px;font-weight:normal;color:#000;letter-spacing:-0.209px;white-space:pre;">Ut sollicitudin, wisi quis suscipit tincidunt, leo lorem iaculis urna, sit amet pharetra ante est ut sem. Ut rhoncus. Nullam</div>
<div style="left:278px;top:455px;font-size:11px;line-height:20px;font-weight:normal;color:#000;letter-spacing:-0.256px;white-space:pre;">imperdiet. Integer lectus leo, elementum non, iaculis in, hendrerit sit amet, odio. Etiam interdum molestie mi. Phasellus purus</div>
<div style="left:278px;top:468px;font-size:11px;line-height:20px;font-weight:normal;color:#000;letter-spacing:-0.225px;white-space:pre;">sapien, dignissim eu, condimentum vel, iaculis non, urna. Curabitur tristique lacus sit amet nulla molestie posuere. Donec</div>
<div style="left:278px;top:481px;font-size:11px;line-height:20px;font-weight:normal;color:#000;letter-spacing:-0.230px;white-space:pre;">venenatis molestie eros. Integer leo lectus, ullamcorper quis, bibendum eu, dictum et, quam. Vivamus magna lorem, ornare</div>
<div style="left:278px;top:494px;font-size:11px;line-height:20px;font-weight:normal;color:#000;letter-spacing:-0.191px;white-space:pre;">quis, vehicula nec, ultrices vitae, ligula. Phasellus enim augue, mattis eget, lobortis nec, pulvinar eget, tellus. Aliquam ultricies,</div>
<div style="left:278px;top:507px;font-size:11px;line-height:20px;font-weight:normal;color:#000;letter-spacing:-0.256px;white-space:pre;">dolor et dapibus pulvinar, magna metus ullamcorper purus, ut hendrerit ipsum lorem quis quam. Maecenas fermentum mattis</div>
<div style="left:278px;top:520px;font-size:11px;line-height:20px;font-weight:normal;color:#000;letter-spacing:-0.188px;white-space:pre;">nunc. Ut vestibulum scelerisque ante. Aliquam et augue. Donec sit amet nunc sit amet mi placerat adipiscing. Integer mollis,</div>
<div style="left:278px;top:533px;font-size:11px;line-height:20px;font-weight:normal;color:#000;letter-spacing:-0.183px;white-space:pre;">nunc ac consectetuer volutpat, massa sapien luctus enim, at cursus lorem massa non nibh. Ut sollicitudin, wisi quis suscipit</div>
<div style="left:278px;top:546px;font-size:11px;line-height:20px;font-weight:normal;color:#000;letter-spacing:-0.215px;white-space:pre;">tincidunt, leo lorem iaculis urna, sit amet pharetra ante est ut sem. Ut rhoncus. Nullam imperdiet. Integer lectus leo, elementum</div>
<div style="left:278px;top:559px;font-size:11px;line-height:20px;font-weight:normal;color:#000;letter-spacing:-0.255px;white-space:pre;">non, iaculis in, hendrerit sit amet, odio. Etiam interdum molestie mi. Phasellus purus sapien, dignissim eu, condimentum vel,</div>
<div style="left:278px;top:572px;font-size:11px;line-height:20px;font-weight:normal;color:#000;letter-spacing:-0.210px;white-space:pre;">iaculis non, urna. Curabitur tristique lacus sit amet nulla molestie posuere. Donec venenatis molestie eros. Integer leo lectus,</div>
<div style="left:871px;top:445px;width:16px;height:154px;background-color:#D4D0C8;background-image:repeating-conic-gradient(#fff 0 25%, #D4D0C8 0 50%);background-size:2px 2px;"></div>
<div style="left:871px;top:445px;width:16px;height:16px;background:#D4D0C8;"></div>
<div style="left:871px;top:445px;width:16px;height:1px;background:#D4D0C8;"></div>
<div style="left:871px;top:445px;width:1px;height:16px;background:#D4D0C8;"></div>
<div style="left:872px;top:446px;width:14px;height:1px;background:#FFFFFF;"></div>
<div style="left:872px;top:446px;width:1px;height:14px;background:#FFFFFF;"></div>
<div style="left:871px;top:460px;width:16px;height:1px;background:#404040;"></div>
<div style="left:886px;top:445px;width:1px;height:16px;background:#404040;"></div>
<div style="left:872px;top:459px;width:14px;height:1px;background:#808080;"></div>
<div style="left:885px;top:446px;width:1px;height:14px;background:#808080;"></div>
<div style="left:878px;top:451px;width:1px;height:1px;background:#000;"></div>
<div style="left:877px;top:452px;width:3px;height:1px;background:#000;"></div>
<div style="left:876px;top:453px;width:5px;height:1px;background:#000;"></div>
<div style="left:875px;top:454px;width:7px;height:1px;background:#000;"></div>
<div style="left:871px;top:583px;width:16px;height:16px;background:#D4D0C8;"></div>
<div style="left:871px;top:583px;width:16px;height:1px;background:#D4D0C8;"></div>
<div style="left:871px;top:583px;width:1px;height:16px;background:#D4D0C8;"></div>
<div style="left:872px;top:584px;width:14px;height:1px;background:#FFFFFF;"></div>
<div style="left:872px;top:584px;width:1px;height:14px;background:#FFFFFF;"></div>
<div style="left:871px;top:598px;width:16px;height:1px;background:#404040;"></div>
<div style="left:886px;top:583px;width:1px;height:16px;background:#404040;"></div>
<div style="left:872px;top:597px;width:14px;height:1px;background:#808080;"></div>
<div style="left:885px;top:584px;width:1px;height:14px;background:#808080;"></div>
<div style="left:875px;top:589px;width:7px;height:1px;background:#000;"></div>
<div style="left:876px;top:590px;width:5px;height:1px;background:#000;"></div>
<div style="left:877px;top:591px;width:3px;height:1px;background:#000;"></div>
<div style="left:878px;top:592px;width:1px;height:1px;background:#000;"></div>
<div style="left:871px;top:461px;width:16px;height:19px;background:#D4D0C8;"></div>
<div style="left:872px;top:462px;width:14px;height:1px;background:#FFFFFF;"></div>
<div style="left:872px;top:462px;width:1px;height:17px;background:#FFFFFF;"></div>
<div style="left:871px;top:479px;width:16px;height:1px;background:#404040;"></div>
<div style="left:886px;top:461px;width:1px;height:19px;background:#404040;"></div>
<div style="left:872px;top:478px;width:14px;height:1px;background:#808080;"></div>
<div style="left:885px;top:462px;width:1px;height:17px;background:#808080;"></div>
</body></html>
